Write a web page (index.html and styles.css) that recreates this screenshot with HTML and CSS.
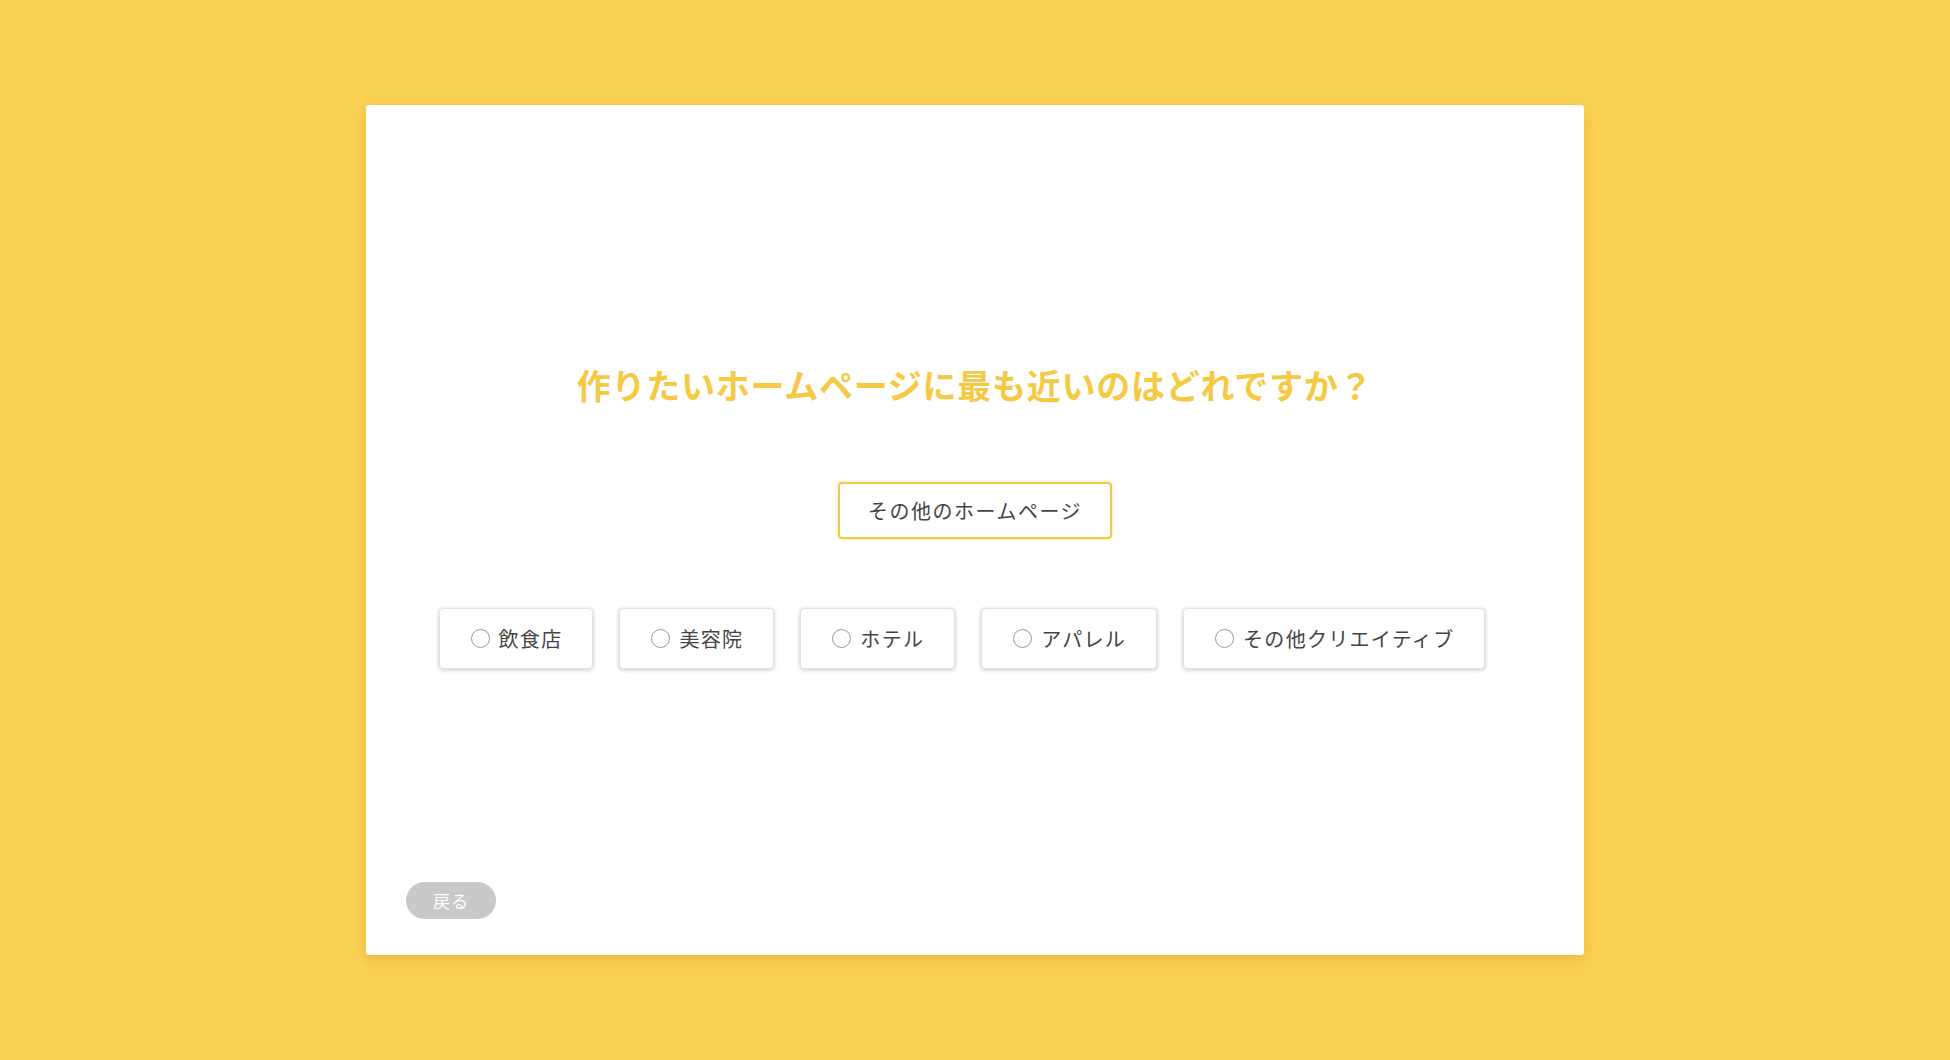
FILE: index.html
```html
<!DOCTYPE html>
<html lang="ja">
<head>
<meta charset="utf-8">
<title>質問</title>
<link rel="stylesheet" href="styles.css">
</head>
<body>
<div class="page">
  <div class="card">
    <h1 class="title">作りたいホームページに最も近いのはどれですか？</h1>
    <div class="selected-row">
      <div class="selected">その他のホームページ</div>
    </div>
    <div class="options">
      <label class="option"><span class="radio"></span>飲食店</label><label class="option"><span class="radio"></span>美容院</label><label class="option"><span class="radio"></span>ホテル</label><label class="option"><span class="radio"></span>アパレル</label><label class="option"><span class="radio"></span>その他クリエイティブ</label>
    </div>
    <div class="footer">
      <button class="back">戻る</button>
    </div>
  </div>
</div>
</body>
</html>
```
FILE: styles.css
```css
html, body {
  margin: 0;
  padding: 0;
  height: 100%;
}
body {
  background: #f8d155;
  font-family: "Noto Sans CJK JP", "Noto Sans", sans-serif;
  color: #444;
}
.page {
  height: 100%;
  display: flex;
  align-items: center;
  justify-content: center;
}
.card {
  width: 1218px;
  height: 850px;
  background: #fff;
  border-radius: 3px;
  box-shadow: 0 6px 14px rgba(215, 150, 20, 0.35);
  display: flex;
  flex-direction: column;
  box-sizing: border-box;
  padding: 256px 0 36px 0;
}
.title {
  margin: 0;
  text-align: center;
  font-size: 34px;
  line-height: 48px;
  font-weight: 700;
  color: #f6c944;
  letter-spacing: 0.75px;
}
.selected-row {
  display: flex;
  justify-content: center;
  margin-top: 73px;
}
.selected {
  width: 274px;
  height: 57px;
  box-sizing: border-box;
  border: 2px solid #f3c941;
  border-radius: 4px;
  box-shadow: 0 0 3px rgba(240, 195, 60, 0.6);
  display: flex;
  align-items: center;
  justify-content: center;
  font-size: 20px;
  letter-spacing: 1.5px;
  color: #444;
}
.options {
  margin-top: 69px;
  text-align: center;
  font-size: 0;
}
.option {
  display: inline-flex;
  align-items: center;
  height: 61px;
  box-sizing: border-box;
  padding: 0 30px 0 31px;
  margin-right: 26px;
  border: 1px solid #e2e2e2;
  border-radius: 4px;
  box-shadow: 0 1px 4px rgba(0, 0, 0, 0.22);
  background: #fff;
  font-size: 20px;
  letter-spacing: 1.3px;
  color: #444;
  vertical-align: top;
}
.radio {
  width: 19px;
  height: 19px;
  box-sizing: border-box;
  border: 1.5px solid #999;
  border-radius: 50%;
  margin-right: 9px;
  flex: none;
}
.footer {
  margin-top: auto;
  padding-left: 40px;
}
.back {
  width: 90px;
  height: 37px;
  border: none;
  border-radius: 19px;
  background: #c9c9c9;
  color: #fff;
  font-family: "Noto Sans CJK JP", sans-serif;
  font-size: 17px;
  letter-spacing: 1px;
  padding: 0;
}
```
